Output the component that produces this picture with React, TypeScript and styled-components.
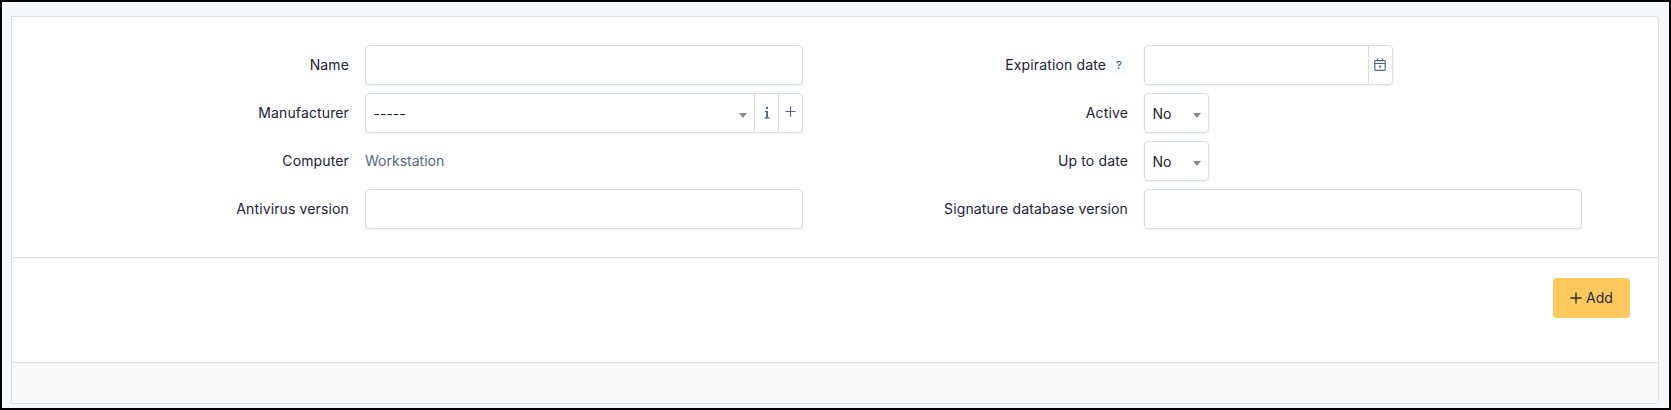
import React from "react";
import styled, { createGlobalStyle } from "styled-components";

const GlobalStyle = createGlobalStyle`
  *, *::before, *::after { box-sizing: border-box; }
  body {
    margin: 0;
    background: #f5f7fb;
    color: #1a2234;
    font-family: Inter, "Liberation Sans", sans-serif;
    font-size: 14px;
    line-height: 20px;
  }
`;

const Page = styled.main`
  height: 410px;
  padding: 14px 10px 4px 9px;
  border: 2px solid #000;
  background: #f5f7fb;
`;

const Card = styled.form`
  display: flex;
  flex-direction: column;
  height: 388px;
  border: 1px solid #dadee5;
  border-radius: 0 4px 4px 0;
  background: #fff;
  overflow: hidden;
`;

const Fields = styled.div`
  display: grid;
  grid-template-columns: 353px 438px 341px 438px;
  grid-auto-rows: 40px;
  row-gap: 8px;
  height: 241px;
  padding-top: 28px;
  border-bottom: 1px solid #dadee5;
`;

const Label = styled.label`
  display: flex;
  align-items: center;
  justify-content: flex-end;
  padding-right: 16px;
  letter-spacing: 0.13px;
  white-space: nowrap;
`;

const Help = styled.span`
  display: inline-flex;
  align-items: center;
  justify-content: center;
  width: 18px;
  height: 18px;
  margin-left: 4px;
  border-radius: 4px;
  background: #fafbfe;
  color: #475c85;
  font-size: 11px;
  font-weight: 500;
`;

const Control = styled.div<{ $width?: number }>`
  display: flex;
  width: ${(p) => (p.$width ? `${p.$width}px` : "100%")};
  height: 40px;
  border: 1px solid #d9dde6;
  border-radius: 4px;
  background: #fff;
  box-shadow: 0 1px 2px rgba(30, 41, 59, 0.08);
`;

const Input = styled.input`
  flex: 1;
  min-width: 0;
  padding: 0 8px;
  border: 0;
  outline: 0;
  background: transparent;
  font: inherit;
`;

const Select = styled.div`
  display: flex;
  flex: 1;
  align-items: center;
  justify-content: space-between;
  padding: 2px 7px 0 7.5px;
`;

const Caret = styled.span`
  margin-top: 3px;
  border: 4px solid transparent;
  border-top: 5px solid #888;
  border-bottom: 0;
`;

const Addon = styled.span`
  display: flex;
  align-items: center;
  justify-content: center;
  width: 24px;
  border-left: 1px solid #d9dde6;
  color: #4f628c;
`;

const Link = styled.a`
  align-self: center;
  color: #526690;
`;

const Actions = styled.div`
  display: flex;
  justify-content: flex-end;
  height: 105px;
  padding: 20px 28px 0 0;
  border-bottom: 1px solid #dadee5;
`;

const AddButton = styled.button`
  display: flex;
  align-items: center;
  justify-content: center;
  gap: 4px;
  width: 77px;
  height: 40px;
  padding: 0;
  border: 0;
  border-radius: 4px;
  background: #fec95c;
  color: #1e293b;
  font: inherit;
  letter-spacing: 0.1px;
`;

const Footer = styled.footer`
  flex: 1;
  background: #fafafa;
`;

const Plus = ({ size, stroke }: { size: number; stroke: number }) => (
  <svg width={size} height={size} viewBox="0 0 12 12" fill="none" stroke="currentColor" strokeWidth={stroke}>
    <path d="M6 .5v11M.5 6h11" />
  </svg>
);

const Info = () => (
  <svg width="6" height="12" viewBox="0 0 6 12" fill="currentColor">
    <path d="M2 0h2v2H2zM1 4h3v6.2h1.5v1.3H.5v-1.3h1.7V5.3H1z" />
  </svg>
);

const Calendar = () => (
  <svg width="12" height="13" viewBox="0 0 12 13" fill="none" stroke="currentColor" strokeWidth="1.2">
    <rect x=".8" y="2.5" width="10.4" height="9.9" rx=".8" />
    <path d="M.8 5.5h10.4M3.5.6v2.8M8.5.6v2.8M5.2 8.2h1v2" />
  </svg>
);

const IconNudge = styled.span<{ $up: number; $left: number }>`
  display: flex;
  margin: 0 ${(p) => p.$left}px ${(p) => p.$up}px 0;
`;

const YesNo = () => (
  <Control $width={65}>
    <Select>
      No
      <Caret />
    </Select>
  </Control>
);

export default function App() {
  return (
    <>
      <GlobalStyle />
      <Page>
        <Card>
          <Fields>
            <Label>Name</Label>
            <Control>
              <Input aria-label="Name" />
            </Control>
            <Label>
              Expiration date <Help>?</Help>
            </Label>
            <Control $width={249}>
              <Input aria-label="Expiration date" />
              <Addon>
                <IconNudge $up={1} $left={1}>
                  <Calendar />
                </IconNudge>
              </Addon>
            </Control>

            <Label>Manufacturer</Label>
            <Control>
              <Select>
                -----
                <Caret />
              </Select>
              <Addon>
                <Info />
              </Addon>
              <Addon>
                <IconNudge $up={4} $left={0}>
                  <Plus size={11} stroke={1.3} />
                </IconNudge>
              </Addon>
            </Control>
            <Label>Active</Label>
            <YesNo />

            <Label>Computer</Label>
            <Link>Workstation</Link>
            <Label>Up to date</Label>
            <YesNo />

            <Label>Antivirus version</Label>
            <Control>
              <Input aria-label="Antivirus version" />
            </Control>
            <Label>Signature database version</Label>
            <Control>
              <Input aria-label="Signature database version" />
            </Control>
          </Fields>
          <Actions>
            <AddButton type="button">
              <Plus size={12} stroke={1.3} />
              Add
            </AddButton>
          </Actions>
          <Footer />
        </Card>
      </Page>
    </>
  );
}
